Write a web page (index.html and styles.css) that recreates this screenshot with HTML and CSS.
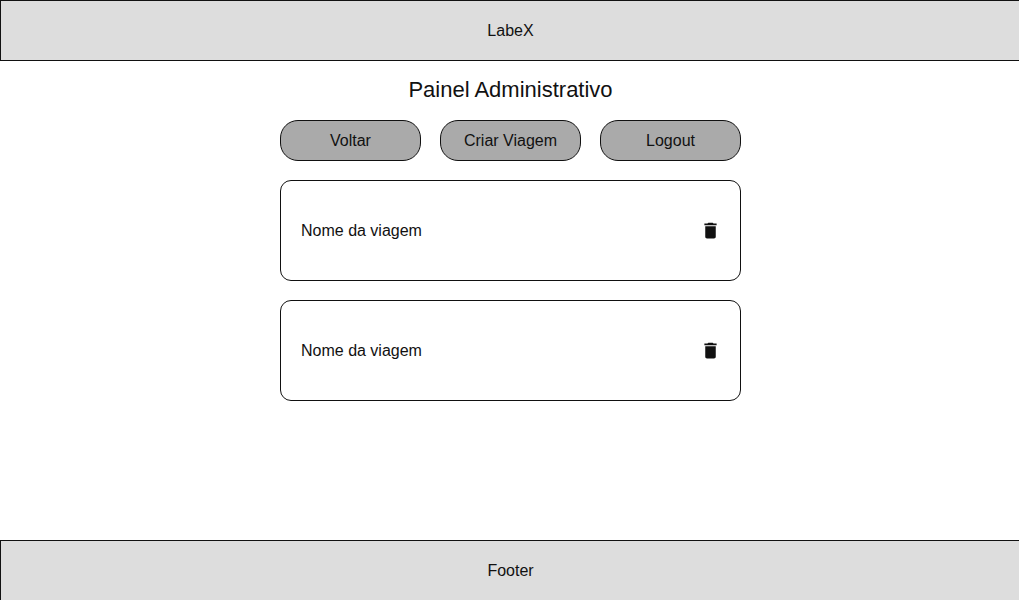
FILE: index.html
```html
<!DOCTYPE html>
<html lang="pt-BR">
<head>
<meta charset="utf-8">
<meta name="viewport" content="width=device-width, initial-scale=1">
<title>LabeX</title>
<link rel="stylesheet" href="styles.css">
</head>
<body>
<header class="bar">LabeX</header>
<main class="panel">
  <h1 class="title">Painel Administrativo</h1>
  <nav class="actions">
    <button class="action" type="button">Voltar</button>
    <button class="action" type="button">Criar Viagem</button>
    <button class="action" type="button">Logout</button>
  </nav>
  <ul class="trips">
    <li class="trip">
      <span>Nome da viagem</span>
      <button class="delete" type="button" aria-label="Excluir viagem">
        <svg class="icon" viewBox="0 0 24 24" aria-hidden="true"><path d="M6 19c0 1.100.9 2 2 2h8c1.100 0 2-.9 2-2V7H6v12zM19 4h-3.500l-1-1h-5l-1 1H5v2h14V4z"/></svg>
      </button>
    </li>
    <li class="trip">
      <span>Nome da viagem</span>
      <button class="delete" type="button" aria-label="Excluir viagem">
        <svg class="icon" viewBox="0 0 24 24" aria-hidden="true"><path d="M6 19c0 1.100.9 2 2 2h8c1.100 0 2-.9 2-2V7H6v12zM19 4h-3.500l-1-1h-5l-1 1H5v2h14V4z"/></svg>
      </button>
    </li>
  </ul>
</main>
<footer class="bar bar-bottom">Footer</footer>
</body>
</html>
```
FILE: styles.css
```css
* {
  box-sizing: border-box;
}

body {
  margin: 0;
  min-height: 100vh;
  display: flex;
  flex-direction: column;
  background: #fff;
  color: #111;
  font-family: "Liberation Sans", Arial, sans-serif;
  font-size: 16px;
  line-height: 20px;
}

.bar {
  display: flex;
  justify-content: center;
  padding: 20px 0 19px 1px;
  background: #ddd;
  border: 1px solid #111;
  border-right: 0;
}

.bar-bottom {
  border-bottom: 0;
}

.panel {
  flex: 1;
  display: flex;
  flex-direction: column;
  align-items: center;
  gap: 19px;
  padding: 15px 0 19px 2px;
}

.title {
  margin: 0 0 -3px;
  font-size: 22px;
  font-weight: 400;
  line-height: 28px;
}

.actions,
.trips {
  width: 100%;
  max-width: 461px;
  display: grid;
  gap: 19px;
}

.actions {
  grid-template-columns: repeat(3, 1fr);
}

.action {
  padding: 10px 0 9px;
  background: #aaa;
  border: 1px solid #111;
  border-radius: 18px;
  color: inherit;
  font: inherit;
}

.trips {
  margin: 0;
  padding: 0;
  list-style: none;
}

.trip {
  display: flex;
  align-items: center;
  justify-content: space-between;
  min-height: 101px;
  padding: 0 19px 0 20px;
  border: 1px solid #111;
  border-radius: 11px;
}

.delete {
  display: flex;
  padding: 0;
  background: none;
  border: 0;
  color: inherit;
}

.icon {
  width: 21px;
  height: 21px;
  fill: currentColor;
}
```
